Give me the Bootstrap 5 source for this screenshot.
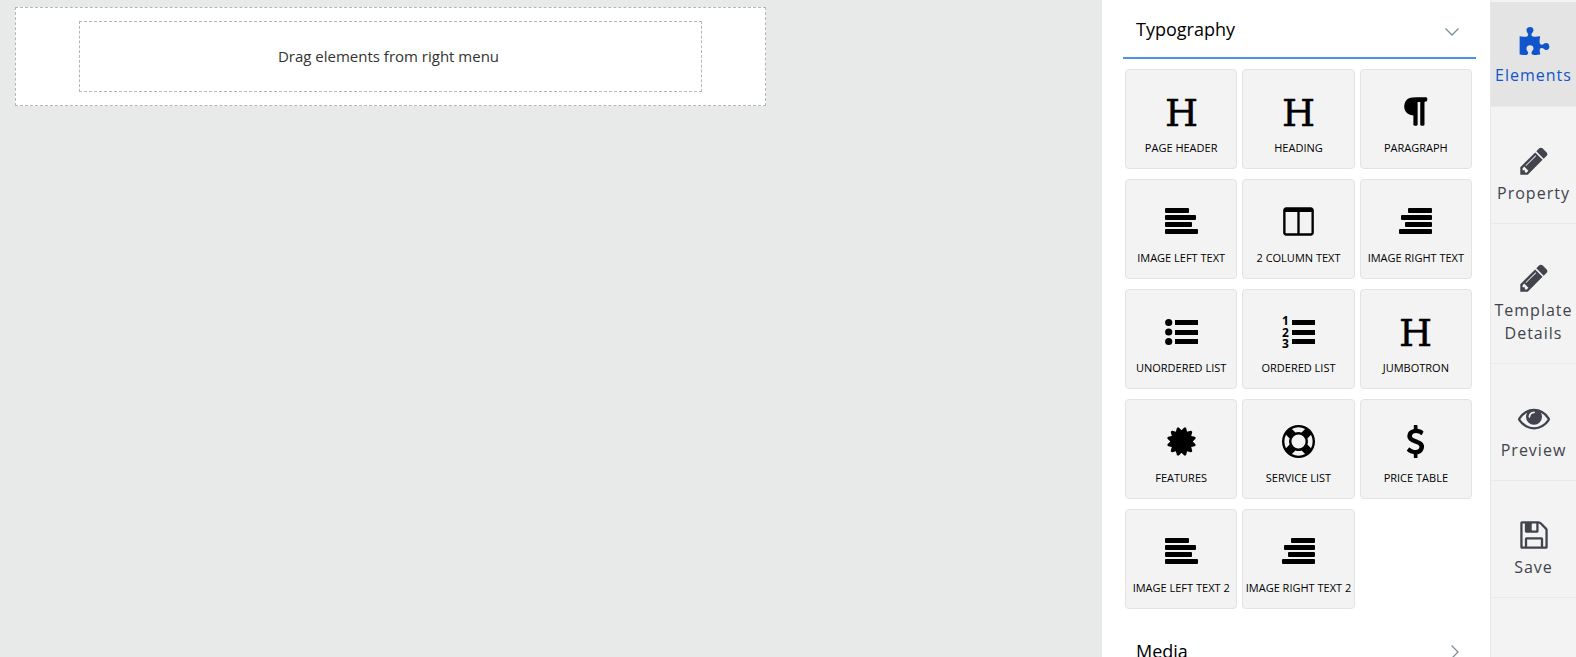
<!DOCTYPE html>
<html lang="en">
<head>
<meta charset="utf-8">
<meta name="viewport" content="width=device-width, initial-scale=1">
<title>Template builder</title>
<link href="https://cdn.jsdelivr.net/npm/bootstrap@5.3.0/dist/css/bootstrap.min.css" rel="stylesheet">
<style>
  body { font-family: "Open Sans", "Noto Sans", sans-serif; color: #000; background: #e8eae9; }
  svg { fill: currentColor; display: block; }
  .drop-page { max-width: 751px; padding: 13px 63px; border: 1px dashed #b5b5b5; background: #fff; margin: 7px 15px; }
  .drop-row { border: 1px dashed #b5b5b5; height: 71px; font-size: 15px; color: #333; }
  .side-panel { width: 388px; padding: 0 14px 0 21px; scrollbar-width: none; }
  .side-panel::-webkit-scrollbar { display: none; }
  .section-toggle { height: 59px; padding: 2px 17px 0 13px; font-size: 18px; color: #000; background: none; border: 0; border-bottom: 2px solid transparent; }
  .section-toggle[aria-expanded="true"] { border-color: #4d90f0; }
  .section-toggle svg { fill: none; stroke: #78909c; stroke-width: 1.3; overflow: visible; }
  .tile-grid { display: grid; grid-template-columns: repeat(3, 1fr); gap: 10px 5px; padding: 10px 4px 13px 2px; }
  .tile { height: 100px; padding: 25px 0 12px; background: #f3f3f3; border: 1px solid #e3e3e3; border-radius: 4px; font-size: 11px; line-height: 16px; color: #000; white-space: nowrap; }
  .tile svg { width: 33px; height: 33px; margin: 0 auto 12px; overflow: visible; }
  .serif-mark { font: 38px "DejaVu Serif", serif; stroke: currentColor; stroke-width: .4px; }
  .digit-mark { font: bold 12px "Open Sans", sans-serif; }
  .side-nav { width: 86px; background: #f3f3f3; border-left: 1px solid #e8e8e8; padding-top: 2px; }
  .side-nav a { padding: 38px 0 18px; border-bottom: 1px solid #e9e9e9; color: #41444d; font-size: 16px; line-height: 23px; letter-spacing: 1px; }
  .side-nav a.active { padding: 25px 0 19px; background: #e4e4e4; color: #1155cc; }
  .side-nav svg { width: 32px; height: 32px; margin: 0 auto 5px; }
</style>
</head>
<body>
<svg class="d-none" aria-hidden="true">
  <symbol id="i-left" viewBox="0 0 33 33"><rect y="3" width="24" height="5" rx="1"/><rect y="10" width="31" height="5" rx="1"/><rect y="17" width="27" height="5" rx="1"/><rect y="24" width="33" height="5" rx="1"/></symbol>
  <symbol id="i-right" viewBox="0 0 33 33"><rect x="9" y="3" width="24" height="5" rx="1"/><rect x="2" y="10" width="31" height="5" rx="1"/><rect x="6" y="17" width="27" height="5" rx="1"/><rect y="24" width="33" height="5" rx="1"/></symbol>
  <symbol id="i-pencil" viewBox="0 0 1792 1792"><path d="M491 1536l91-91-235-235-91 91v107h128v128h107zm523-928q0-22-22-22-10 0-17 7l-542 542q-7 7-7 17 0 22 22 22 10 0 17-7l542-542q7-7 7-17zm-54-192l416 416-832 832h-416v-416zm683 96q0 53-37 90l-166 166-416-416 166-165q36-38 90-38 53 0 91 38l235 234q37 39 37 91z"/></symbol>
</svg>

<div class="d-flex vh-100 overflow-hidden">
  <main class="flex-grow-1 overflow-auto">
    <div class="drop-page">
      <div class="drop-row d-flex align-items-center justify-content-center pe-1">Drag elements from right menu</div>
    </div>
  </main>

  <aside class="side-panel bg-white flex-shrink-0 overflow-auto">
    <button type="button" class="section-toggle w-100 d-flex align-items-center justify-content-between" data-bs-toggle="collapse" data-bs-target="#typography" aria-expanded="true" aria-controls="typography">
      Typography
      <svg width="14" height="8" viewBox="0 0 14 8" class="mt-1"><path d="M.5.5 7 7 13.5.5"/></svg>
    </button>
    <div class="collapse show" id="typography">
      <div class="tile-grid">
        <button type="button" class="tile"><svg viewBox="0 0 33 33"><text class="serif-mark" x="16.5" y="30.5" text-anchor="middle">H</text></svg>PAGE HEADER</button>
        <button type="button" class="tile"><svg viewBox="0 0 33 33"><text class="serif-mark" x="16.5" y="30.5" text-anchor="middle">H</text></svg>HEADING</button>
        <button type="button" class="tile"><svg viewBox="0 0 1792 1792"><path d="M1534 189v73q0 29-18.5 61t-42.5 32q-50 0-54 1-26 6-32 31-3 11-3 64v1152q0 25-18 43t-43 18h-108q-25 0-43-18t-18-43v-1218h-143v1218q0 25-17.5 43t-43.5 18h-108q-26 0-43.5-18t-17.5-43v-496q-147-12-245-59-126-58-192-179-64-117-64-259 0-166 88-286 88-118 209-159 111-37 417-37h479q25 0 43 18t18 43z"/></svg>PARAGRAPH</button>
        <button type="button" class="tile"><svg><use href="#i-left"/></svg>IMAGE LEFT TEXT</button>
        <button type="button" class="tile"><svg viewBox="0 0 1792 1792"><path d="M224 1536h608v-1152h-640v1120q0 13 9.5 22.5t22.5 9.5zm1376-32v-1120h-640v1152h608q13 0 22.5-9.5t9.5-22.5zm128-1216v1216q0 66-47 113t-113 47h-1344q-66 0-113-47t-47-113v-1216q0-66 47-113t113-47h1344q66 0 113 47t47 113z"/></svg>2 COLUMN TEXT</button>
        <button type="button" class="tile"><svg><use href="#i-right"/></svg>IMAGE RIGHT TEXT</button>
        <button type="button" class="tile"><svg viewBox="0 0 33 33"><circle cx="3.7" cy="7.5" r="3.6"/><circle cx="3.7" cy="17" r="3.6"/><circle cx="3.7" cy="26.5" r="3.6"/><path d="M10 5h23v5H10zM10 15h23v5H10zM10 24h23v5H10z"/></svg>UNORDERED LIST</button>
        <button type="button" class="tile"><svg viewBox="0 0 33 33"><text class="digit-mark"><tspan x="0" y="10">1</tspan><tspan x="0" y="21.5">2</tspan><tspan x="0" y="33">3</tspan></text><path d="M10 5h23v5H10zM10 15h23v5H10zM10 24h23v5H10z"/></svg>ORDERED LIST</button>
        <button type="button" class="tile"><svg viewBox="0 0 33 33"><text class="serif-mark" x="16.5" y="30.5" text-anchor="middle">H</text></svg>JUMBOTRON</button>
        <button type="button" class="tile"><svg viewBox="0 0 1792 1792"><path d="M1504 896l138 135q30 28 20 70-12 41-52 51l-188 48 53 186q12 41-19 70-29 31-70 19l-186-53-48 188q-10 40-51 52-12 2-19 2-31 0-51-22l-135-138-135 138q-28 30-70 20-41-11-51-52l-48-188-186 53q-41 12-70-19-31-29-19-70l53-186-188-48q-40-10-52-51-10-42 20-70l138-135-138-135q-30-28-20-70 12-41 52-51l188-48-53-186q-12-41 19-70 29-31 70-19l186 53 48-188q10-41 51-51 41-12 70 19l135 139 135-139q29-30 70-19 41 10 51 51l48 188 186-53q41-12 70 19 31 29 19 70l-53 186 188 48q40 10 52 51 10 42-20 70z"/></svg>FEATURES</button>
        <button type="button" class="tile"><svg viewBox="0 0 1792 1792"><path d="M896 0q182 0 348 71t286 191 191 286 71 348-71 348-191 286-286 191-348 71-348-71-286-191-191-286-71-348 71-348 191-286 286-191 348-71zm0 128q-190 0-361 90l194 194q82-28 167-28t167 28l194-194q-171-90-361-90zm-678 1129l194-194q-28-82-28-167t28-167l-194-194q-90 171-90 361t90 361zm678 407q190 0 361-90l-194-194q-82 28-167 28t-167-28l-194 194q171 90 361 90zm0-384q159 0 271.5-112.5t112.5-271.5-112.5-271.5-271.5-112.5-271.5 112.5-112.5 271.5 112.5 271.5 271.5 112.5zm484-217l194 194q90-171 90-361t-90-361l-194 194q28 82 28 167t-28 167z"/></svg>SERVICE LIST</button>
        <button type="button" class="tile"><svg viewBox="0 0 1792 1792"><path d="M1362 1185q0 153-99.5 263.5t-258.5 136.5v175q0 14-9 23t-23 9h-135q-13 0-22.5-9.5t-9.5-22.5v-175q-66-9-127.5-31t-101.5-44.5-74-48-46.5-37.5-17.5-18q-17-21-2-41l103-135q7-10 23-12 15-2 24 9l2 2q113 99 243 125 37 8 74 8 81 0 142.5-43t61.5-122q0-28-15-53t-33.5-42-58.5-37.5-66-32-80-32.5q-39-16-61.5-25t-61.5-26.5-62.5-31-56.5-35.5-53.5-42.5-43.5-49-35.5-58-21-66.5-8.5-78q0-138 98-242t255-134v-180q0-13 9.5-22.5t22.5-9.5h135q14 0 23 9t9 23v176q57 6 110.5 23t87 33.5 63.5 37.5 39 29 15 14q17 18 5 38l-81 146q-8 15-23 16-14 3-27-7-3-3-14.5-12t-39-26.5-58.5-32-74.5-26-85.5-11.5q-95 0-155 43t-60 111q0 26 8.5 48t29.5 41.5 39.5 33 56 31 60.5 27 70 27.5q53 20 81 31.5t76 35 75.5 42.5 62 50 53 63.5 31.5 76.5 13 94z"/></svg>PRICE TABLE</button>
        <button type="button" class="tile"><svg><use href="#i-left"/></svg>IMAGE LEFT TEXT 2</button>
        <button type="button" class="tile"><svg><use href="#i-right"/></svg>IMAGE RIGHT TEXT 2</button>
      </div>
    </div>
    <button type="button" class="section-toggle w-100 d-flex align-items-center justify-content-between" aria-expanded="false">
      Media
      <svg width="8" height="14" viewBox="0 0 8 14"><path d="M.5.5 7 7 .5 13.5"/></svg>
    </button>
  </aside>

  <nav class="side-nav flex-shrink-0 overflow-hidden text-center" aria-label="Builder">
    <a href="#elements" class="active d-block text-decoration-none" aria-current="page"><svg viewBox="0 0 1792 1792"><path d="M1755 1099q0 81-44.5 135t-123.5 54q-41 0-77.5-17.5t-59-38-56.5-38-71-17.5q-110 0-110 124 0 39 16 115t15 115v5q-22 0-33 1-34 3-97.5 11.5t-115.5 13.5-98 5q-61 0-103-26.5t-42-83.5q0-37 17.5-71t38-56.5 38-59 17.5-77.5q0-79-54-123.5t-135-44.5q-84 0-143 45.5t-59 127.5q0 43 15 83t33.5 64.5 33.5 53 15 50.5q0 45-46 89-37 35-117 35-95 0-245-24-9-2-27.5-4t-27.5-4l-13-2q-1 0-3-1-2 0-2-1v-1024q2 1 17.5 3.5t34 5 21.5 3.5q150 24 245 24 80 0 117-35 46-44 46-89 0-22-15-50.5t-33.5-53-33.5-64.5-15-83q0-82 59-127.5t144-45.5q80 0 134 44.5t54 123.5q0 41-17.5 77.5t-38 59-38 56.5-17.5 71q0 57 42 83.5t103 26.5q64 0 180-15t163-17v2q-1 2-3.5 17.5t-5 34-3.5 21.5q-24 150-24 245 0 80 35 117 44 46 89 46 22 0 50.5-15t53-33.5 64.5-33.5 83-15q82 0 127.5 59t45.5 143z"/></svg>Elements</a>
    <a href="#property" class="d-block text-decoration-none"><svg><use href="#i-pencil"/></svg>Property</a>
    <a href="#details" class="d-block text-decoration-none"><svg><use href="#i-pencil"/></svg>Template Details</a>
    <a href="#preview" class="d-block text-decoration-none"><svg viewBox="0 0 1792 1792"><path d="M1664 960q-152-236-381-353 61 104 61 225 0 185-131.5 316.5t-316.5 131.5-316.5-131.5-131.5-316.5q0-121 61-225-229 117-381 353 133 205 333.5 326.5t434.5 121.5 434.5-121.5 333.5-326.5zm-720-384q0-20-14-34t-34-14q-125 0-214.5 89.5t-89.5 214.5q0 20 14 34t34 14 34-14 14-34q0-86 61-147t147-61q20 0 34-14t14-34zm848 384q0 34-20 69-140 230-376.5 368.5t-499.5 138.5-499.5-139-376.5-368q-20-35-20-69t20-69q140-229 376.5-368t499.5-139 499.5 139 376.5 368q20 35 20 69z"/></svg>Preview</a>
    <a href="#save" class="d-block text-decoration-none"><svg viewBox="0 0 1792 1792"><path d="M512 1536h768v-384h-768v384zm896 0h128v-896q0-14-10-38.5t-20-34.5l-281-281q-10-10-34-20t-39-10v416q0 40-28 68t-68 28h-576q-40 0-68-28t-28-68v-416h-128v1280h128v-416q0-40 28-68t68-28h832q40 0 68 28t28 68v416zm-384-928v-320q0-13-9.5-22.5t-22.5-9.5h-192q-13 0-22.5 9.5t-9.5 22.5v320q0 13 9.5 22.5t22.5 9.5h192q13 0 22.5-9.5t9.5-22.5zm640 32v928q0 40-28 68t-68 28h-1344q-40 0-68-28t-28-68v-1344q0-40 28-68t68-28h928q40 0 88 20t76 48l280 280q28 28 48 76t20 88z"/></svg>Save</a>
  </nav>
</div>
<script src="https://cdn.jsdelivr.net/npm/bootstrap@5.3.0/dist/js/bootstrap.bundle.min.js"></script>
</body>
</html>
